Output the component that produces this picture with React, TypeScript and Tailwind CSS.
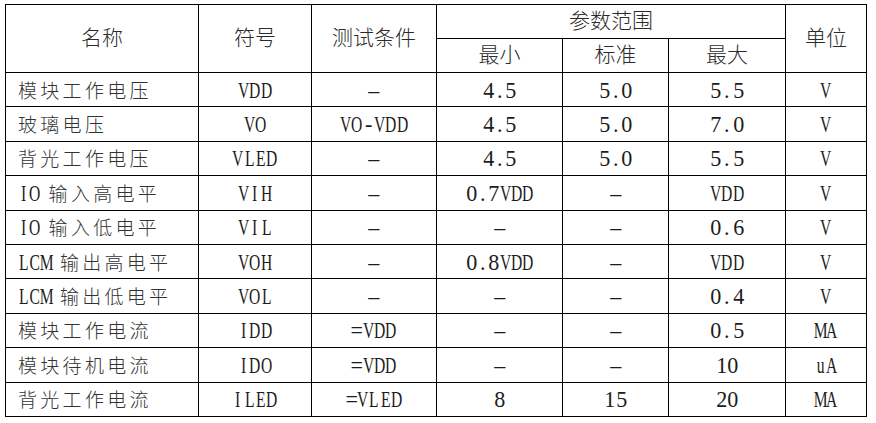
import React from "react";

type FirstCell = string | [string, string];

const rows: [FirstCell, string, string, string, string, string, string][] = [
  ["模块工作电压", "VDD", "–", "4.5", "5.0", "5.5", "V"],
  ["玻璃电压", "VO", "VO-VDD", "4.5", "5.0", "7.0", "V"],
  ["背光工作电压", "VLED", "–", "4.5", "5.0", "5.5", "V"],
  [["IO", "输入高电平"], "VIH", "–", "0.7VDD", "–", "VDD", "V"],
  [["IO", "输入低电平"], "VIL", "–", "–", "–", "0.6", "V"],
  [["LCM", "输出高电平"], "VOH", "–", "0.8VDD", "–", "VDD", "V"],
  [["LCM", "输出低电平"], "VOL", "–", "–", "–", "0.4", "V"],
  ["模块工作电流", "IDD", "=VDD", "–", "–", "0.5", "MA"],
  ["模块待机电流", "IDO", "=VDD", "–", "–", "10", "uA"],
  ["背光工作电流", "ILED", "=VLED", "8", "15", "20", "MA"],
];

function Mono({ text }: { text: string }) {
  return (
    <span className="inline-flex items-baseline font-['Liberation_Serif','Times_New_Roman',serif] text-[24px] leading-none text-[#1c1c1c]">
      {text.split("").map((ch, i) => {
        const isLetter = /[A-Za-z]/.test(ch);
        return (
          <span
            key={i}
            className={
              isLetter
                ? "inline-flex w-[11.3px] justify-center scale-x-[0.65]"
                : "inline-flex w-[11.3px] justify-center scale-x-[0.92]"
            }
          >
            {ch}
          </span>
        );
      })}
    </span>
  );
}

function Cjk({ text }: { text: string }) {
  return (
    <span className="font-['Noto_Sans_CJK_SC',sans-serif] font-light text-[19px] tracking-[3.3px] leading-none text-[#333333]">
      {text}
    </span>
  );
}

function Head({ text }: { text: string }) {
  return (
    <span className="font-['Noto_Sans_CJK_SC',sans-serif] font-light text-[21px] leading-none text-[#2a2a2a]">
      {text}
    </span>
  );
}

const th = "border border-black text-center align-middle p-0 h-[34px] font-normal";
const td = "border border-black text-center align-middle p-0 h-[34.4px] leading-none";

export default function App() {
  return (
    <div className="w-[876px] h-[423px] bg-white pl-[5px] pt-[4px]">
      <table className="border-collapse table-fixed w-[862px]">
        <colgroup>
          <col className="w-[193px]" />
          <col className="w-[113px]" />
          <col className="w-[125px]" />
          <col className="w-[126px]" />
          <col className="w-[106px]" />
          <col className="w-[117px]" />
          <col className="w-[81px]" />
        </colgroup>
        <thead>
          <tr>
            <th rowSpan={2} className={th}>
              <Head text="名称" />
            </th>
            <th rowSpan={2} className={th}>
              <Head text="符号" />
            </th>
            <th rowSpan={2} className={th}>
              <Head text="测试条件" />
            </th>
            <th colSpan={3} className={th}>
              <Head text="参数范围" />
            </th>
            <th rowSpan={2} className={th}>
              <Head text="单位" />
            </th>
          </tr>
          <tr>
            <th className={th}>
              <Head text="最小" />
            </th>
            <th className={th}>
              <Head text="标准" />
            </th>
            <th className={th}>
              <Head text="最大" />
            </th>
          </tr>
        </thead>
        <tbody>
          {rows.map((r, i) => (
            <tr key={i}>
              <td className="border border-black text-left align-middle pl-[12px] pr-0 py-0 h-[34.4px] leading-none whitespace-nowrap">
                {typeof r[0] === "string" ? (
                  <Cjk text={r[0]} />
                ) : (
                  <span className="inline-flex items-baseline gap-[8px]">
                    <Mono text={r[0][0]} />
                    <Cjk text={r[0][1]} />
                  </span>
                )}
              </td>
              {r.slice(1).map((c, j) => (
                <td key={j} className={td}>
                  <Mono text={c as string} />
                </td>
              ))}
            </tr>
          ))}
        </tbody>
      </table>
    </div>
  );
}
